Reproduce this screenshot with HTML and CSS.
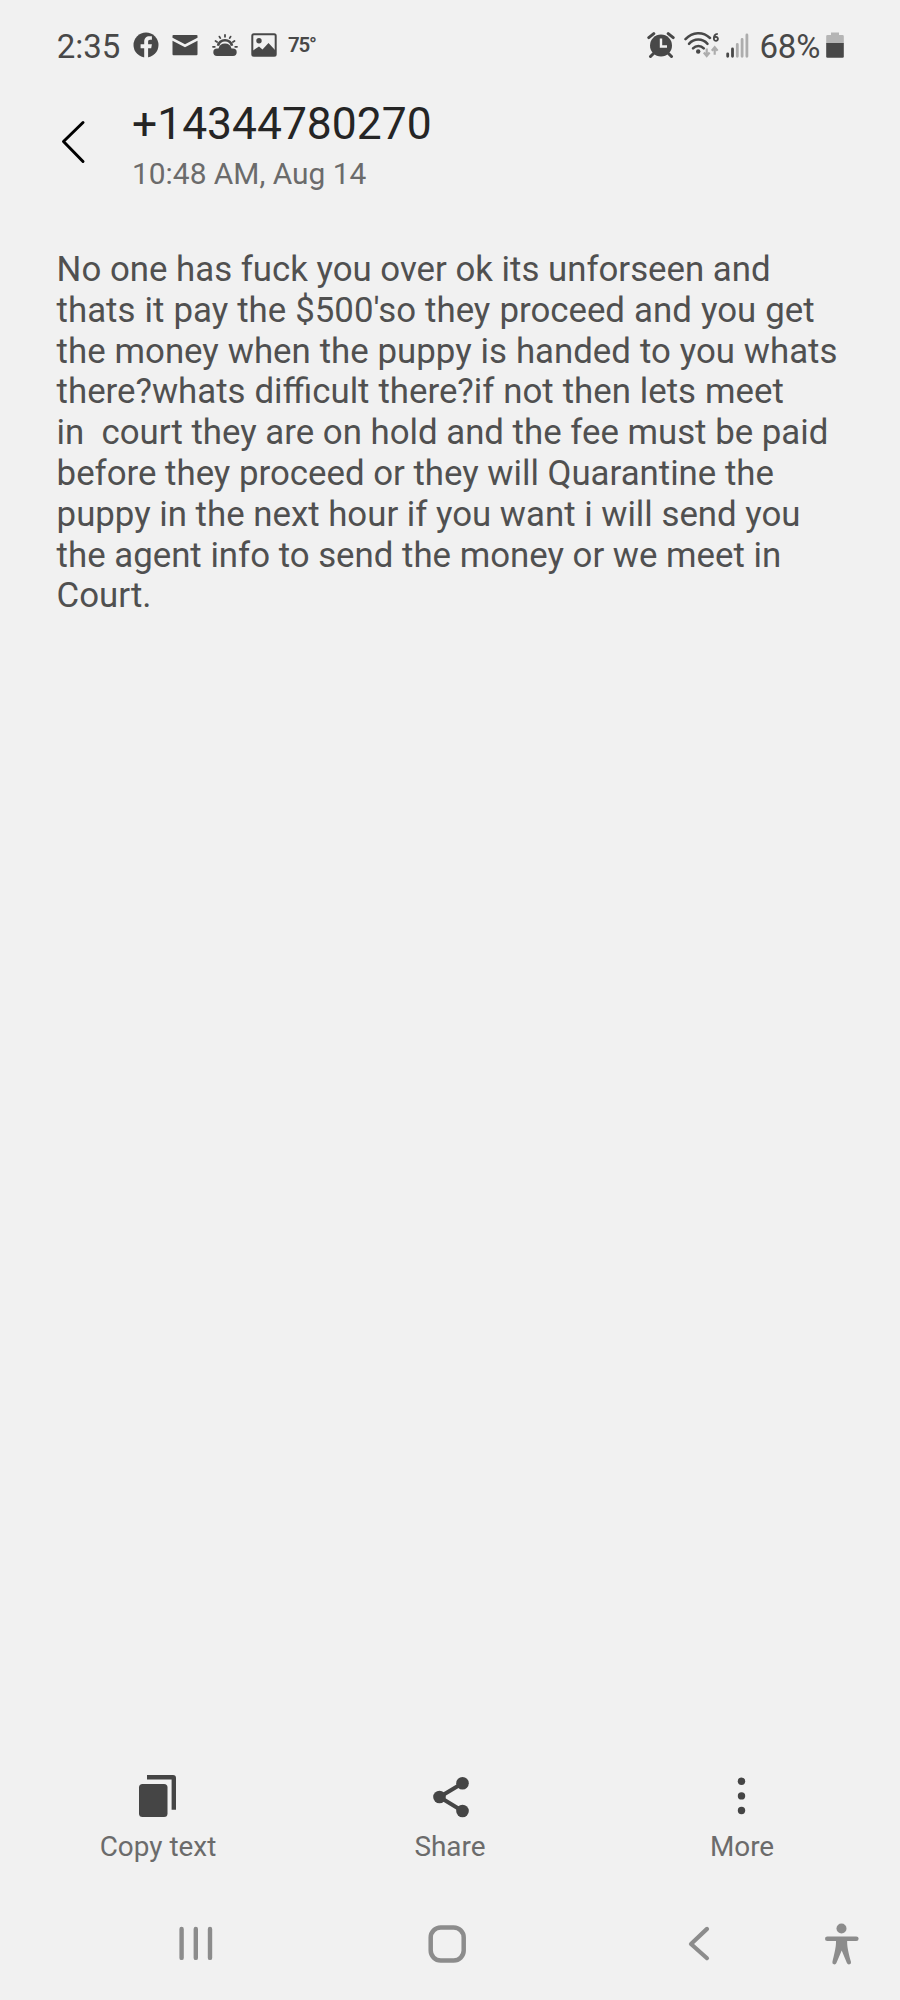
FILE: index.html
```html
<!DOCTYPE html>
<html lang="en">
<head>
<meta charset="utf-8">
<title>Message details</title>
<link rel="stylesheet" href="styles.css">
</head>
<body>
<div class="screen">
  <div class="status">
    <div class="status-left">
      <span class="clock">2:35</span>
      <svg class="st-facebook" width="26" height="30" viewBox="0 0 26 30"><circle cx="13" cy="15" r="12.5" fill="#484848"/><path d="M11.2 28V18.2H7.6V14.2h3.6v-2.4c0-3.6 2-5.6 5.2-5.6h2.5v3.6h-1.8c-1.5 0-2 .8-2 2v2.4h3.8l-.7 4h-3.1V28z" fill="#f1f1f1"/></svg>
      <svg class="st-mail" width="26" height="30" viewBox="0 0 26 30" fill="#484848"><path d="M.5 5.800Q.5 5 1.500 5h23q1 0 1 .8v2L13 14.300.5 7.800z"/><path d="M.5 10.800 13 17.300l12.500-6.500v13.400q0 1-1 1h-23q-1 0-1-1z"/></svg>
      <svg class="st-weather" width="26" height="30" viewBox="0 0 26 30"><g stroke="#484848" stroke-width="1.800" stroke-linecap="round" fill="none"><path d="M13 5v1.800M7.400 6.600l.9 1.500M18.600 6.600l-.9 1.500M3.500 11l1.600 1M22.500 11l-1.600 1M1 16.800h1.800M23.200 16.800H25"/><path d="M6 15.700a7.200 7.200 0 0 1 14 0" stroke-width="2.600" stroke-linecap="butt"/></g><path d="M5 26a3.700 3.700 0 0 1 0-7.400h1.500a6.700 6.700 0 0 1 13 0H21a3.700 3.700 0 0 1 0 7.400z" fill="#484848"/></svg>
      <svg class="st-picture" width="26" height="30" viewBox="0 0 26 30"><rect x="1.300" y="4.200" width="23.400" height="21.600" rx="1.500" fill="none" stroke="#484848" stroke-width="2"/><circle cx="8" cy="10.800" r="2.700" fill="#484848"/><path d="M2 20.500 8 16.500l3.500 3L17.500 13l6.500 7v6H2z" fill="#484848"/></svg>
      <span class="temp">75°</span>
    </div>
    <div class="status-right">
      <svg class="st-alarm" width="28" height="30" viewBox="0 0 28 30"><circle cx="14" cy="15.500" r="11" fill="#484848"/><path d="M1.800 7.600 6.800 3.600M26.200 7.600l-5-4M6.500 23.500l-3 3M21.500 23.500l3 3" stroke="#484848" stroke-width="3" stroke-linecap="round"/><path d="M14 8.500v8h6" stroke="#f1f1f1" stroke-width="2.400" fill="none"/></svg>
      <svg class="st-wifi" width="37" height="30" viewBox="0 0 37 30"><g fill="none" stroke="#484848" stroke-width="2.500" stroke-linecap="round"><path d="M1.500 9.200C8.500 1.500 19 1.300 26 8"/><path d="M5 13.800c5-5.600 13.500-5.600 18.500 0"/><path d="M9 18.400c3-3.300 7.800-3.300 10.800 0"/></g><circle cx="14.200" cy="21.500" r="2.200" fill="#484848"/><path d="M33.800 3.900C30.600 4.200 29.700 6.500 29.900 9a2 2 0 1 0 .5-1.500" fill="none" stroke="#484848" stroke-width="1.900"/><path d="M22.700 18.500v7M19.800 22.500l2.900 3.500 2.900-3.500M30.700 24.800v-7M27.800 20.800l2.900-3.500 2.900 3.500" fill="none" stroke="#adadad" stroke-width="2.200"/></svg>
      <svg class="st-signal" width="23" height="30" viewBox="0 0 23 30" stroke-width="2.800" stroke-linecap="round"><path d="M1.700 23.800v2.500M6.500 19v7.300" stroke="#484848"/><path d="M11.300 14.500v11.800M16.100 9.500v16.800M20.900 5v21.300" stroke="#adadad"/></svg>
      <span class="percent">68%</span>
      <svg class="st-battery" width="18" height="30" viewBox="0 0 18 30"><path d="M5 2.500h8V5h3.500q1.300 0 1.300 1.300V13.500H.2V6.300Q.2 5 1.500 5H5z" fill="#b5b5b5"/><path d="M.2 13h17.600v13.600q0 1.200-1.300 1.200h-15Q.2 27.800.2 26.600z" fill="#484848"/></svg>
    </div>
  </div>

  <header class="header">
    <svg class="back" width="26" height="46" viewBox="0 0 26 46"><path d="M23 3.500 3.500 22.500 23 42.500" fill="none" stroke="#000" stroke-width="3" stroke-linecap="round" stroke-linejoin="round"/></svg>
    <div class="heading">
      <div class="number">+14344780270</div>
      <div class="date">10:48 AM, Aug 14</div>
    </div>
  </header>

  <main class="message">No one has fuck you over ok its unforseen and
<span class="loose">thats it pay the $500'so they proceed and you get</span>
<span class="open">the money when the puppy is handed to you whats</span>
<span class="open">there?whats difficult there?if not then lets meet</span>
in  court they are on hold and the fee must be paid
before they proceed or they will Quarantine the
puppy in the next hour if you want i will send you
the agent info to send the money or we meet in
Court.</main>

  <div class="actions">
    <div class="action">
      <svg width="40" height="46" viewBox="0 0 40 46"><rect x="1" y="11" width="28.500" height="33" rx="3.500" fill="#454545"/><path d="M9 7.300h24.200v29.500" fill="none" stroke="#454545" stroke-width="0"/><path d="M9 2h26q3 0 3 3v31.800h-4.400V6.600H9z" fill="#454545"/></svg>
      <span>Copy text</span>
    </div>
    <div class="action">
      <svg width="40" height="46" viewBox="0 0 40 46"><path d="M32.500 10.200 9.500 24l23 14" fill="none" stroke="#454545" stroke-width="4"/><g fill="#454545"><circle cx="32.500" cy="10.200" r="6.300"/><circle cx="9.500" cy="24" r="6.300"/><circle cx="32.500" cy="38" r="6.300"/></g></svg>
      <span>Share</span>
    </div>
    <div class="action">
      <svg width="40" height="46" viewBox="0 0 40 46" fill="#454545"><circle cx="19.500" cy="8.200" r="3.700"/><circle cx="19.500" cy="22.900" r="3.700"/><circle cx="19.500" cy="37.500" r="3.700"/></svg>
      <span>More</span>
    </div>
  </div>

  <nav class="navbar">
    <svg class="nav-recents" width="36" height="42" viewBox="0 0 36 42"><path d="M3.600 5.900v29M17.800 5.900v29M32 5.900v29" stroke="#8c8c8c" stroke-width="4.400" stroke-linecap="round"/></svg>
    <svg class="nav-home" width="40" height="42" viewBox="0 0 40 42"><rect x="3.700" y="4.500" width="33" height="33" rx="10" fill="none" stroke="#8c8c8c" stroke-width="4.500"/></svg>
    <svg class="nav-back" width="24" height="42" viewBox="0 0 24 42"><path d="M20 5.900 4 21l16 14.200" fill="none" stroke="#8c8c8c" stroke-width="4.200" stroke-linecap="round" stroke-linejoin="round"/></svg>
    <svg class="nav-access" width="36" height="42" viewBox="0 0 36 42"><circle cx="16.500" cy="5.500" r="5" fill="#8c8c8c"/><path d="M2.300 15.700h29" stroke="#8c8c8c" stroke-width="4.600" stroke-linecap="round"/><path transform="translate(-1.600 0)" d="M12.500 15h11.400c-.3 6-.3 9 3.700 24q.4 1.800-1.300 2.300-2 .5-2.800-1.200L18.300 27.500 13 40.100q-.8 1.700-2.600 1.200-1.800-.6-1.400-2.300c3.800-15 3.800-18 3.500-24z" fill="#8c8c8c"/></svg>
  </nav>
</div>
</body>
</html>
```
FILE: styles.css
```css
* { box-sizing: border-box; }
html, body { margin: 0; background: #f1f1f1; }
svg { display: block; flex: none; }

.screen {
  width: 900px;
  height: 2000px;
  overflow: hidden;
  display: flex;
  flex-direction: column;
  background: #f1f1f1;
  font-family: Roboto, sans-serif;
  color: #505050;
}

.status {
  display: flex;
  justify-content: space-between;
  height: 90px;
  padding: 30px 56px 0 56.700px;
  color: #484848;
}
.status-left, .status-right { display: flex; height: 30px; }
.clock, .percent {
  font-size: 33px;
  line-height: 33px;
  white-space: nowrap;
}
.clock { width: 76.300px; }
.percent { width: 66.500px; letter-spacing: -0.2px; }
.temp {
  font-size: 20.5px;
  font-weight: 600;
  line-height: 30px;
  letter-spacing: -1.2px;
}
.st-mail, .st-weather, .st-picture { margin-left: 13.300px; }
.temp { margin-left: 11px; }
.st-wifi { margin-left: 9.500px; }
.st-signal { margin: 0 11px 0 4.500px; }

.header {
  display: flex;
  height: 159px;
  padding: 0 60px;
}
.back { margin-top: 29px; }
.heading { margin-left: 46px; white-space: nowrap; }
.number {
  margin-top: 8px;
  font-size: 44.400px;
  line-height: 52px;
  color: #252525;
}
.date {
  margin-top: 6px;
  font-size: 29.900px;
  line-height: 36px;
  color: #6b6b6b;
}

.message {
  flex: 1;
  padding: 0 0 0 56.600px;
  font-size: 34.800px;
  line-height: 40.800px;
  white-space: pre;
  color: #505050;
}
.loose { word-spacing: 0.45px; }
.open { word-spacing: 0.3px; }

.actions {
  display: grid;
  grid-template-columns: repeat(3, 292px);
  justify-content: center;
  height: 127px;
}
.action {
  display: flex;
  flex-direction: column;
  align-items: center;
  font-size: 27.900px;
  line-height: 34px;
  color: #6b6b6b;
}
.action span { margin-top: 10.500px; }

.navbar {
  display: flex;
  height: 100px;
  padding: 23px 0 0 178px;
}
.nav-home { margin-left: 213px; }
.nav-back { margin-left: 220px; }
.nav-access { margin-left: 114px; }
```
